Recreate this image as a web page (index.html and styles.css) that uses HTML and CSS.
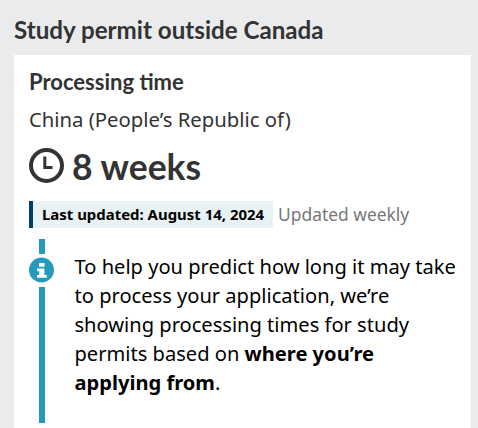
FILE: index.html
```html
<!DOCTYPE html>
<html lang="en">
<head>
<meta charset="utf-8">
<title>Study permit outside Canada</title>
<link rel="stylesheet" href="styles.css">
</head>
<body>
<h1 class="page-title">Study permit outside Canada</h1>
<section class="card">
  <h2 class="card-title">Processing time</h2>
  <p class="country">China (People’s Republic of)</p>
  <p class="duration">
    <svg class="clock" viewBox="0 0 36 36" width="36" height="36" aria-hidden="true">
      <circle cx="17.5" cy="17.5" r="15.5" fill="none" stroke="#333" stroke-width="4"/>
      <path d="M15.8 8.5V19.5H23.5" fill="none" stroke="#333" stroke-width="3"/>
    </svg>
    <span>8 weeks</span>
  </p>
  <div class="updated">
    <span class="updated-date">Last updated: August 14, 2024</span>
    <span class="updated-freq">Updated weekly</span>
  </div>
  <div class="notice">
    <div class="notice-rail">
      <span class="rail-top"></span>
      <svg class="info" viewBox="0 0 26 26" width="26" height="26" aria-hidden="true">
        <circle cx="12.5" cy="13" r="12.5" fill="#269abc"/>
        <rect x="10" y="6" width="5.6" height="3.8" rx="0.6" fill="#fff"/>
        <path d="M8 11.5h7.4v6.5h2.4v2.7H8V18h2.2v-3.8H8z" fill="#fff"/>
      </svg>
      <span class="rail-bottom"></span>
    </div>
    <p class="notice-text">To help you predict how long it may take to process your application, we’re showing processing times for study permits based on <strong>where you’re applying from</strong>.</p>
  </div>
</section>
</body>
</html>
```

FILE: styles.css
```css
html, body {
  margin: 0;
  height: 428px;
  overflow: hidden;
}
body {
  background: #e9ebed;
  padding: 0 7px 0 14px;
  color: #333;
  font-family: "Noto Sans", sans-serif;
}
.page-title {
  margin: 0;
  padding-top: 15px;
  height: 55px;
  box-sizing: border-box;
  font: 700 24.15px/29px Lato, sans-serif;
}
.card {
  background: #fff;
  padding: 13px 15px 0;
  height: 373px;
  box-sizing: border-box;
}
.card-title {
  margin: 0;
  font: 700 22px/28px Lato, sans-serif;
}
.country {
  margin: 10px 0 0;
  font-size: 20.3px;
  line-height: 26px;
}
.duration {
  display: flex;
  align-items: flex-start;
  gap: 7px;
  margin: 13px 0 0;
  font: 700 35.5px/44px Lato, sans-serif;
}
.clock {
  flex: none;
  margin-top: 3px;
}
.updated {
  display: flex;
  align-items: center;
  gap: 5px;
  margin-top: 12px;
}
.updated-date {
  background: #e8f2f4;
  border-left: 4px solid #003e6d;
  padding: 0 9px 1px;
  font-size: 14.95px;
  font-weight: 700;
  line-height: 26px;
  color: #000;
}
.updated-freq {
  margin-bottom: 2px;
  font-size: 17.4px;
  color: #777;
}
.notice {
  display: flex;
  margin-top: 11px;
  color: #000;
}
.notice-rail {
  display: flex;
  flex-direction: column;
  align-items: center;
  width: 26px;
  height: 184px;
  flex: none;
}
.rail-top {
  width: 6px;
  height: 15px;
  background: #269abc;
}
.info {
  margin: 3px 0 4px;
  flex: none;
}
.rail-bottom {
  width: 6px;
  flex: 1;
  background: #269abc;
}
.notice-text {
  margin: 13px 0 0 19.5px;
  font-size: 20.1px;
  line-height: 29px;
}
```
